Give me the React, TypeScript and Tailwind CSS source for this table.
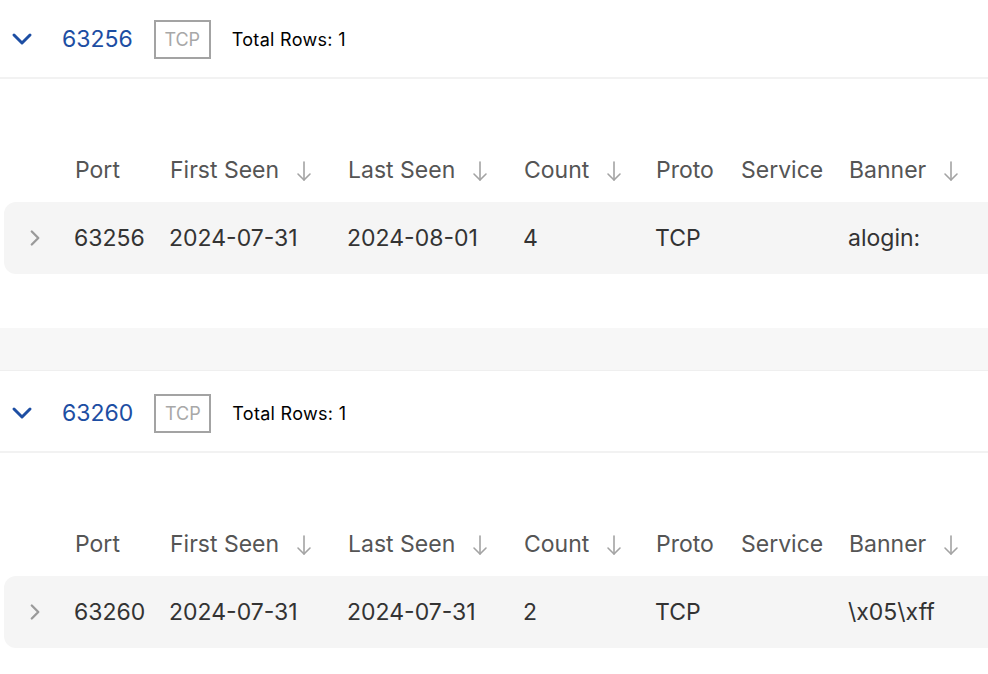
import React from 'react';

interface PortRow {
  port: string;
  firstSeen: string;
  lastSeen: string;
  count: string;
  proto: string;
  service: string;
  banner: string;
}

const groups: PortRow[] = [
  { port: '63256', firstSeen: '2024-07-31', lastSeen: '2024-08-01', count: '4', proto: 'TCP', service: '', banner: 'alogin:' },
  { port: '63260', firstSeen: '2024-07-31', lastSeen: '2024-07-31', count: '2', proto: 'TCP', service: '', banner: '\\x05\\xff' },
];

const SortArrow = () => (
  <svg width="18" height="22" viewBox="0 0 18 22" fill="none" stroke="#a3a3a3" strokeWidth="1.6" strokeLinecap="round" strokeLinejoin="round" className="ml-4 shrink-0">
    <path d="M9 2v18" />
    <path d="M3 14l6 6 6-6" />
  </svg>
);

const cols = [
  { label: 'Port', w: 'w-[95px]', sort: false },
  { label: 'First Seen', w: 'w-[178px]', sort: true },
  { label: 'Last Seen', w: 'w-[176px]', sort: true },
  { label: 'Count', w: 'w-[132px]', sort: true },
  { label: 'Proto', w: 'w-[85px]', sort: false },
  { label: 'Service', w: 'w-[108px]', sort: false },
  { label: 'Banner', w: 'w-[140px]', sort: true },
];

const PortGroup: React.FC<{ row: PortRow; first?: boolean }> = ({ row, first }) => {
  const cells = [row.port, row.firstSeen, row.lastSeen, row.count, row.proto, row.service, row.banner];
  return (
    <section className={first ? '-mt-[3px]' : ''}>
      <div className="h-[82px] pt-[4px] flex items-center border-b-2 border-[#f2f2f2]">
        <svg width="22" height="14" viewBox="0 0 22 14" fill="none" stroke="#1d4ea3" strokeWidth="3" strokeLinecap="round" strokeLinejoin="round" className="ml-[11px]">
          <path d="M3 3l8 8 8-8" />
        </svg>
        <span className="ml-[29px] text-[23px] text-[#1d4ea3]">{row.port}</span>
        <span className="ml-[21px] h-[39px] w-[57px] border-2 border-[#a3a3a3] flex items-center justify-center text-[18px] text-[#a8a8a8]">
          TCP
        </span>
        <span className="ml-[21px] text-[18px] tracking-[0.3px] text-black">Total Rows: 1</span>
      </div>
      <div className="pt-[72px] pb-[54px]">
        <div className="flex items-center h-[39px] pl-[75px] text-[23px] text-[#555555]">
          {cols.map((c) => (
            <div key={c.label} className={`${c.w} flex items-center shrink-0`}>
              <span>{c.label}</span>
              {c.sort && <SortArrow />}
            </div>
          ))}
        </div>
        <div className="mt-[12px] ml-[4px] h-[72px] bg-[#f5f5f5] rounded-l-[12px] flex items-center text-[23px] text-[#333333]">
          <svg width="14" height="20" viewBox="0 0 14 20" fill="none" stroke="#9a9a9a" strokeWidth="2.5" strokeLinecap="round" strokeLinejoin="round" className="ml-[25px]">
            <path d="M3 3l7 7-7 7" />
          </svg>
          <div className="flex ml-[32px]">
            {cells.map((v, i) => (
              <div key={i} className={`${cols[i].w} shrink-0`}>{v}</div>
            ))}
          </div>
        </div>
      </div>
    </section>
  );
};

export default function App() {
  return (
    <div className="w-[988px] h-[674px] overflow-hidden bg-white" style={{ fontFamily: '"Inter", "Noto Sans", sans-serif' }}>
      <PortGroup row={groups[0]} first />
      <div className="h-[43px] bg-[#f7f7f7] border-b border-[#efefef]" />
      <PortGroup row={groups[1]} />
    </div>
  );
}
